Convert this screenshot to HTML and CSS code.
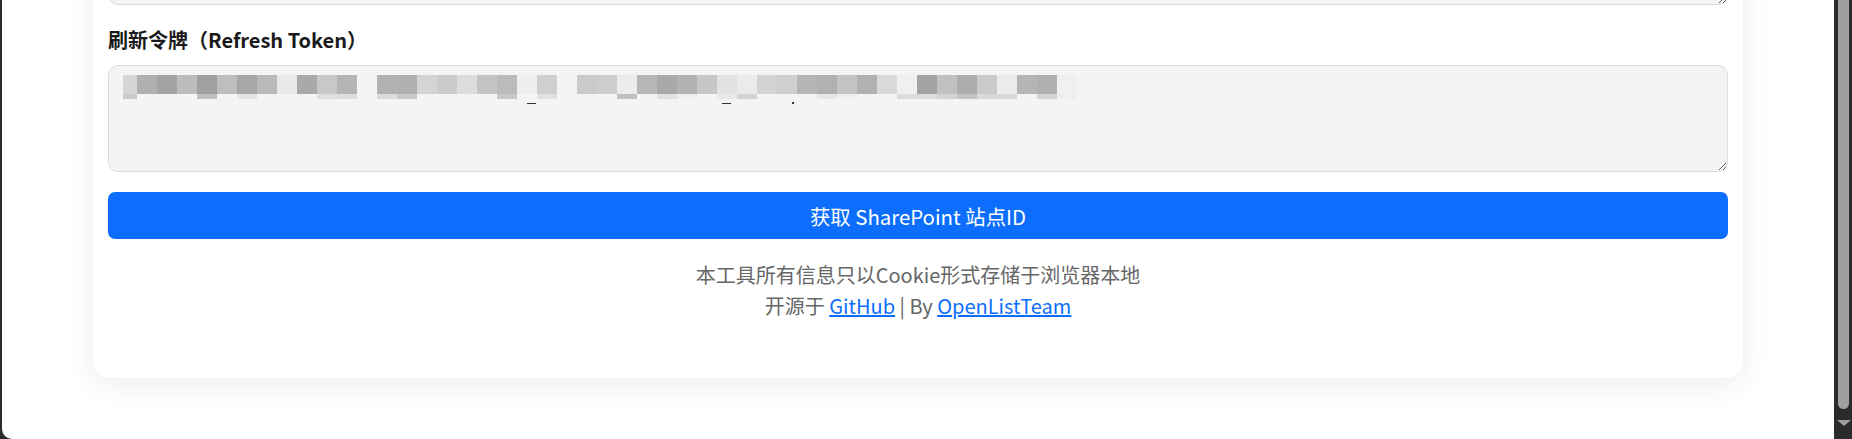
FILE: index.html
```html
<!DOCTYPE html>
<html lang="zh-CN">
<head>
<meta charset="utf-8">
<title>获取 SharePoint 站点ID</title>
<link rel="stylesheet" href="styles.css">
</head>
<body>
<div class="window">
  <div class="viewport">
    <main class="card">
      <div class="group">
        <textarea class="field" aria-label="访问令牌"></textarea>
      </div>
      <div class="group">
        <label class="label" for="refresh">刷新令牌（Refresh Token）</label>
        <div class="field-wrap">
          <textarea class="field" id="refresh"></textarea>
          <div class="mosaic" aria-hidden="true">
            <div class="row row-main">
              <span class="cell first" style="background:#d5d5d5"></span><span class="cell" style="background:#b0b0b0"></span><span class="cell" style="background:#a4a4a4"></span><span class="cell" style="background:#bcbcbc"></span><span class="cell" style="background:#a0a0a0"></span><span class="cell" style="background:#bebebe"></span><span class="cell" style="background:#a7a7a7"></span><span class="cell" style="background:#b9b9b9"></span><span class="cell" style="background:#e9e9e9"></span><span class="cell" style="background:#a9a9a9"></span><span class="cell" style="background:#c8c8c8"></span><span class="cell" style="background:#b5b5b5"></span><span class="cell"></span><span class="cell" style="background:#b2b2b2"></span><span class="cell" style="background:#b0b0b0"></span><span class="cell" style="background:#d4d4d4"></span><span class="cell" style="background:#cccccc"></span><span class="cell" style="background:#dcdcdc"></span><span class="cell" style="background:#c4c4c4"></span><span class="cell" style="background:#bbbbbb"></span><span class="cell" style="background:#eeefee"></span><span class="cell" style="background:#cfcfcf"></span><span class="cell"></span><span class="cell" style="background:#cacaca"></span><span class="cell" style="background:#cdcdcd"></span><span class="cell" style="background:#ececec"></span><span class="cell" style="background:#b7b7b7"></span><span class="cell" style="background:#a9a9a9"></span><span class="cell" style="background:#b3b3b3"></span><span class="cell" style="background:#c7c7c7"></span><span class="cell" style="background:#e2e2e2"></span><span class="cell" style="background:#ebebeb"></span><span class="cell" style="background:#d3d3d3"></span><span class="cell" style="background:#cfcfcf"></span><span class="cell" style="background:#b5b5b5"></span><span class="cell" style="background:#b1b1b1"></span><span class="cell" style="background:#c4c4c4"></span><span class="cell" style="background:#b1b1b1"></span><span class="cell" style="background:#d9d9d9"></span><span class="cell" style="background:#f0f0f0"></span><span class="cell" style="background:#a4a4a4"></span><span class="cell" style="background:#c0c0c0"></span><span class="cell" style="background:#adadad"></span><span class="cell" style="background:#cacaca"></span><span class="cell" style="background:#ececec"></span><span class="cell" style="background:#b5b5b5"></span><span class="cell" style="background:#b0b0b0"></span><span class="cell" style="background:#f0f0f0"></span>
            </div>
            <div class="row row-tail">
              <span class="cell first" style="background:#cbcbcb"></span><span class="cell"></span><span class="cell"></span><span class="cell"></span><span class="cell" style="background:#c0c0c0"></span><span class="cell"></span><span class="cell" style="background:#e4e4e4"></span><span class="cell"></span><span class="cell"></span><span class="cell"></span><span class="cell" style="background:#e0e0e0"></span><span class="cell" style="background:#dedede"></span><span class="cell"></span><span class="cell" style="background:#dadada"></span><span class="cell" style="background:#c9c9c9"></span><span class="cell"></span><span class="cell"></span><span class="cell"></span><span class="cell"></span><span class="cell" style="background:#c8c8c8"></span><span class="cell"></span><span class="cell" style="background:#e2e2e2"></span><span class="cell"></span><span class="cell"></span><span class="cell"></span><span class="cell" style="background:#c0c0c0"></span><span class="cell"></span><span class="cell" style="background:#e0e0e0"></span><span class="cell" style="background:#eeeeee"></span><span class="cell"></span><span class="cell" style="background:#e8e8e8"></span><span class="cell" style="background:#d3d3d3"></span><span class="cell"></span><span class="cell"></span><span class="cell"></span><span class="cell" style="background:#e6e8e6"></span><span class="cell" style="background:#eeeeee"></span><span class="cell"></span><span class="cell"></span><span class="cell" style="background:#dcdcdc"></span><span class="cell" style="background:#dcdcdc"></span><span class="cell" style="background:#d3d3d3"></span><span class="cell" style="background:#c4c4c4"></span><span class="cell" style="background:#d8d8d8"></span><span class="cell" style="background:#d8d8d8"></span><span class="cell"></span><span class="cell" style="background:#d3d3d3"></span><span class="cell" style="background:#eeeeee"></span>
            </div>
            <span class="mark under" style="left:404px"></span>
            <span class="mark under" style="left:599px"></span>
            <span class="mark dot" style="left:669px"></span>
          </div>
        </div>
      </div>
      <button class="submit" type="button">获取 SharePoint 站点ID</button>
      <footer class="footer">
        <p class="line">本工具所有信息只以Cookie形式存储于浏览器本地</p>
        <p class="line">开源于 <a href="#">GitHub</a> | By <a href="#">OpenListTeam</a></p>
      </footer>
    </main>
  </div>
  <div class="scrollbar" aria-hidden="true">
    <div class="thumb"></div>
    <div class="arrow"></div>
  </div>
</div>
</body>
</html>
```

FILE: styles.css
```css
html, body {
  margin: 0;
  padding: 0;
  height: 439px;
  overflow: hidden;
}

body {
  font-family: "Noto Sans CJK SC", "Noto Sans", sans-serif;
  background: #2b2b2b;
}

.window {
  display: flex;
  height: 439px;
  padding-left: 2px;
  background: #2b2b2b;
}

.viewport {
  flex: 1;
  min-width: 0;
  background: #ffffff;
  border-bottom-left-radius: 10px;
  overflow: hidden;
  padding: 0 91px;
}

.card {
  margin-top: -122px;
  background: #ffffff;
  border-radius: 16px;
  box-shadow: 0 6px 30px rgba(0, 0, 0, 0.08);
  padding: 20px 15px 57px;
}

.group {
  margin-bottom: 20px;
}

.label {
  display: block;
  font-size: 20px;
  line-height: 30px;
  font-weight: 700;
  color: #1a1a1a;
  margin-bottom: 10px;
}

.field-wrap {
  position: relative;
}

.field {
  display: block;
  box-sizing: border-box;
  width: 100%;
  height: 107px;
  margin: 0;
  padding: 10px 14px;
  border: 1px solid #dcdcdc;
  border-radius: 10px;
  background: #f4f4f4;
  resize: vertical;
  font-family: inherit;
  font-size: 16px;
}

.mosaic {
  position: absolute;
  left: 15px;
  top: 10px;
  pointer-events: none;
}

.row {
  display: flex;
}

.row-main {
  height: 19px;
}

.row-tail {
  height: 5px;
}

.cell {
  width: 20px;
  flex: none;
}

.cell.first {
  width: 14px;
}

.mark {
  position: absolute;
  background: #333333;
}

.under {
  top: 28px;
  width: 9px;
  height: 1px;
}

.dot {
  top: 27px;
  width: 2px;
  height: 2px;
}

.submit {
  display: block;
  width: 100%;
  height: 47px;
  border: none;
  border-radius: 7px;
  background: #0d6efd;
  color: #ffffff;
  font-family: inherit;
  font-size: 20.4px;
  cursor: pointer;
}

.footer {
  margin-top: 20px;
  text-align: center;
  color: #666666;
  font-size: 20px;
  line-height: 31px;
}

.line {
  margin: 0;
}

.footer a {
  color: #0d6efd;
  text-decoration: underline;
}

.scrollbar {
  width: 18px;
  flex: none;
  background: #2b2b2b;
  display: flex;
  flex-direction: column;
  align-items: center;
}

.thumb {
  width: 11px;
  height: 409px;
  margin-left: 1px;
  background: #9f9f9f;
  border-radius: 0 0 6px 6px;
}

.arrow {
  margin-top: 11px;
  margin-left: 1px;
  width: 0;
  height: 0;
  border-left: 7px solid transparent;
  border-right: 7px solid transparent;
  border-top: 6px solid #9f9f9f;
}
```
